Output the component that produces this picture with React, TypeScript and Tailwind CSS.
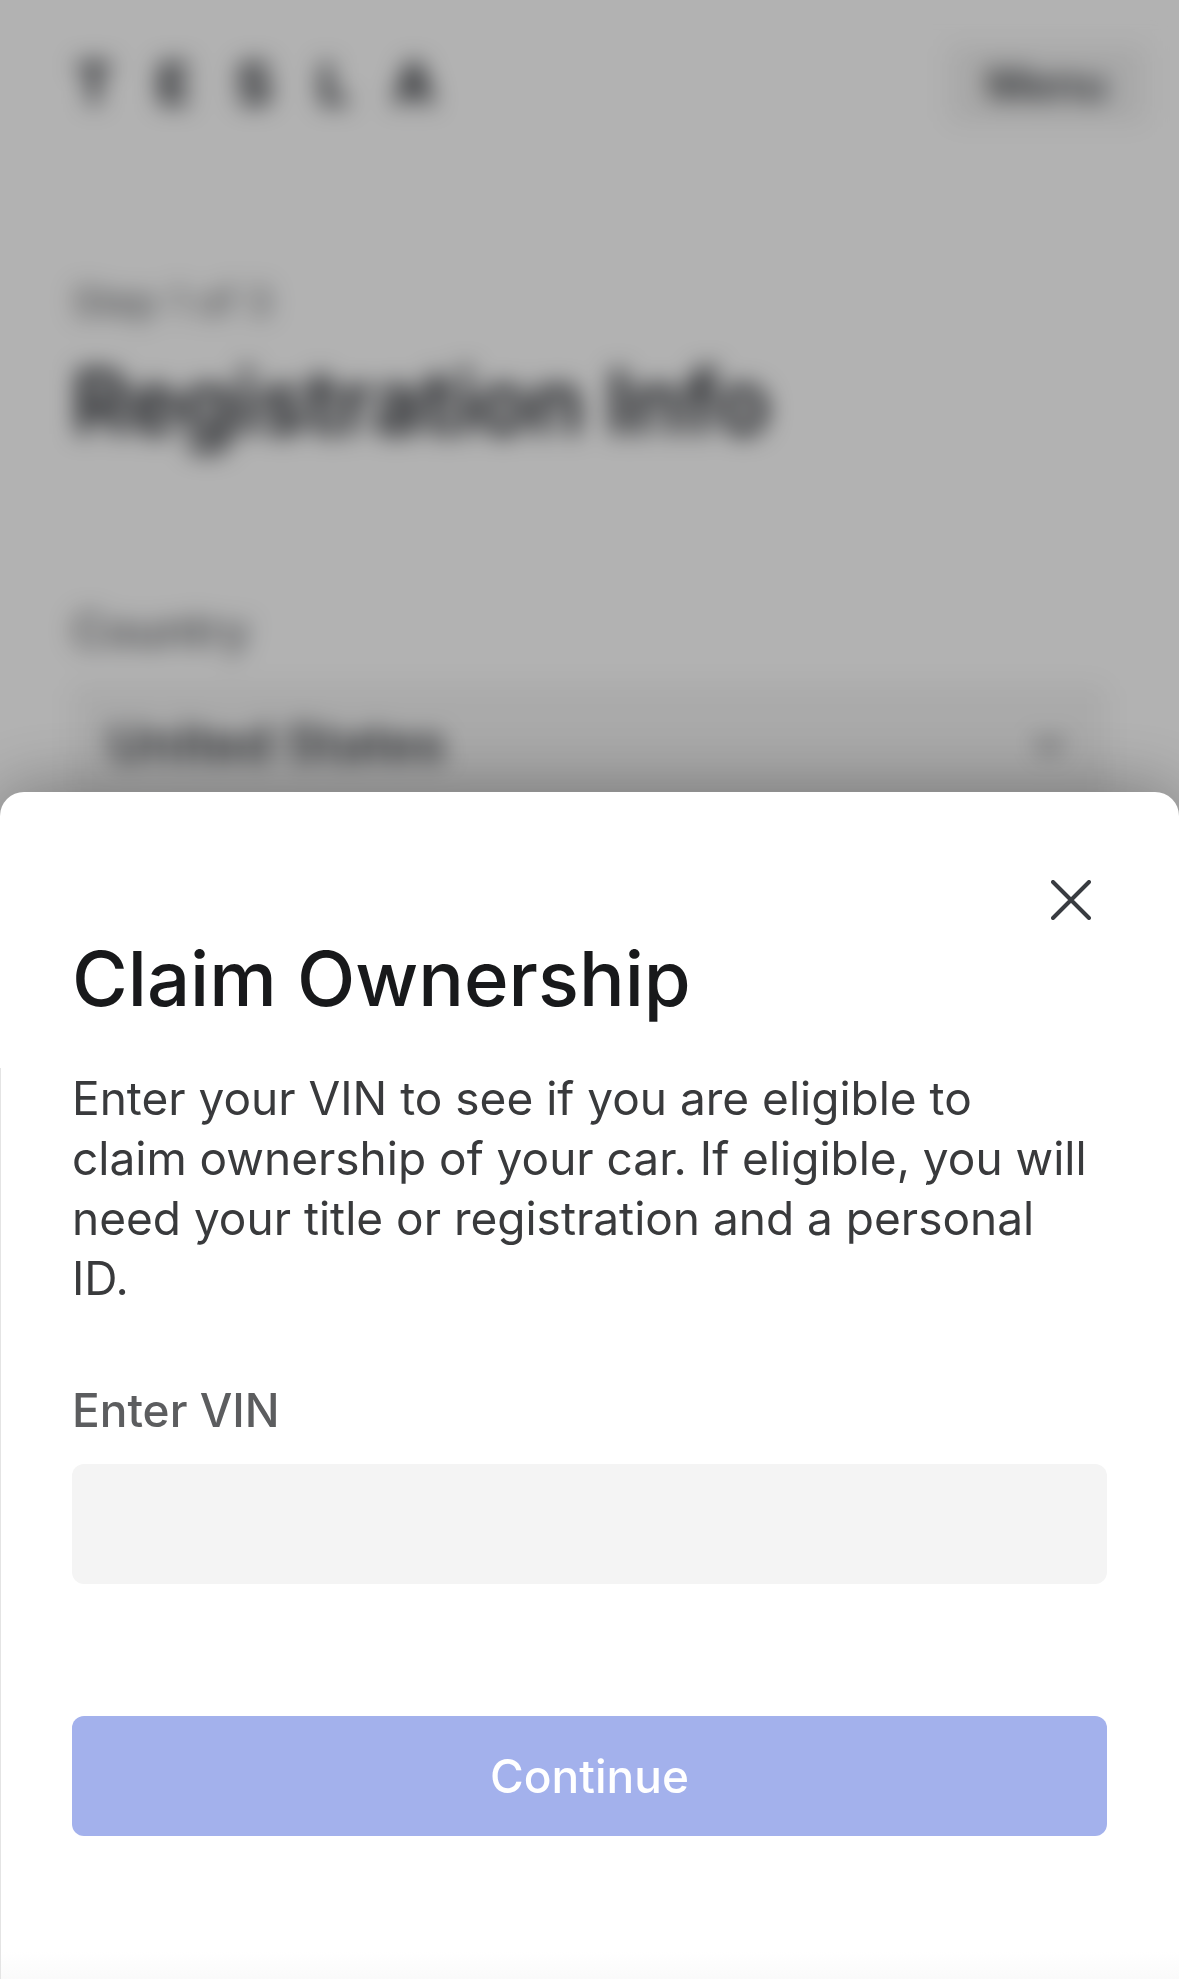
import { FormEvent, useState } from "react";

const COUNTRIES = ["United States", "Canada", "Mexico"];

// Registration step shown underneath the dialog.
function RegistrationPage() {
  return (
    <div className="absolute inset-0 overflow-hidden bg-white" aria-hidden="true">
      <header className="flex items-center justify-between pt-11 pr-8 pl-18">
        <a
          href="#home"
          tabIndex={-1}
          className="flex gap-9 text-center text-[56px] leading-20 font-bold text-[#171a20]"
        >
          {["T", "E", "S", "L", "A"].map((c) => (
            <span key={c} className="w-11">
              {c}
            </span>
          ))}
        </a>
        <button
          tabIndex={-1}
          className="h-20 rounded-xl bg-black/5 px-10 text-[44px] font-semibold text-[#393c41]"
        >
          Menu
        </button>
      </header>

      <main className="px-18 pt-37">
        <p className="text-[40px] leading-15 text-[#5c5e62]">Step 1 of 3</p>
        <h1 className="mt-4 text-[88px] leading-27 font-semibold text-[#171a20]">
          Registration Info
        </h1>
        <label
          htmlFor="country"
          className="mt-36 block text-[46px] leading-15 font-medium text-[#5c5e62]"
        >
          Country
        </label>
        <div className="mt-6 flex h-30 items-center rounded-xl bg-[#f4f4f4] pr-10 pl-9">
          <select
            id="country"
            tabIndex={-1}
            className="grow appearance-none bg-transparent text-[52px] font-semibold text-[#393c41]"
          >
            {COUNTRIES.map((c) => (
              <option key={c}>{c}</option>
            ))}
          </select>
          <svg viewBox="0 0 36 36" className="size-9 fill-none stroke-[#5c5e62] stroke-[5]">
            <path d="M5 12l13 13 13-13" />
          </svg>
        </div>
      </main>
    </div>
  );
}

export default function App() {
  const [vin, setVin] = useState("");
  const submit = (e: FormEvent) => e.preventDefault();

  return (
    <div className="relative min-h-screen font-['Inter','Liberation_Sans',sans-serif]">
      <RegistrationPage />

      <div className="relative flex min-h-screen flex-col justify-end overflow-hidden bg-black/30 backdrop-blur-[12px]">
        <section
          role="dialog"
          aria-modal="true"
          aria-labelledby="claim-title"
          className="rounded-t-3xl bg-white shadow-[0_0_72px_rgba(0,0,0,0.35)]"
        >
          <div className="flex flex-col px-18 pt-22 pb-12">
            <button aria-label="Close" className="mr-4 size-10 self-end">
              <svg
                viewBox="0 0 40 40"
                className="size-10 fill-none stroke-[#393c41] stroke-4"
                strokeLinecap="round"
              >
                <path d="M2 2l36 36M38 2L2 38" />
              </svg>
            </button>
            <h2
              id="claim-title"
              className="mt-4 text-[76px] leading-21 font-medium text-[#18191b]"
            >
              Claim Ownership
            </h2>
          </div>

          <form
            onSubmit={submit}
            className="bg-linear-to-t from-[#fafafa] to-white to-3% px-18 pb-[143px] shadow-[inset_1px_0_0_#e4e4e4]"
          >
            <p className="text-[46px] leading-15 text-[#393a3c]">
              Enter your VIN to see if you are eligible to
              <br />
              claim ownership of your car. If eligible, you will
              <br />
              need your title or registration and a personal
              <br />
              ID.
            </p>
            <label
              htmlFor="vin"
              className="mt-18 block text-[46px] leading-15 font-medium text-[#5c5d5f]"
            >
              Enter VIN
            </label>
            <input
              id="vin"
              value={vin}
              onChange={(e) => setVin(e.target.value)}
              className="mt-6 block h-30 w-full rounded-xl bg-[#f4f4f4] px-9 text-[46px] text-[#393a3c] outline-none"
            />
            <button
              type="submit"
              className="mt-33 block h-30 w-full rounded-xl bg-[#a3b1ec] text-[46px] font-medium text-white"
            >
              Continue
            </button>
          </form>
        </section>
      </div>
    </div>
  );
}
